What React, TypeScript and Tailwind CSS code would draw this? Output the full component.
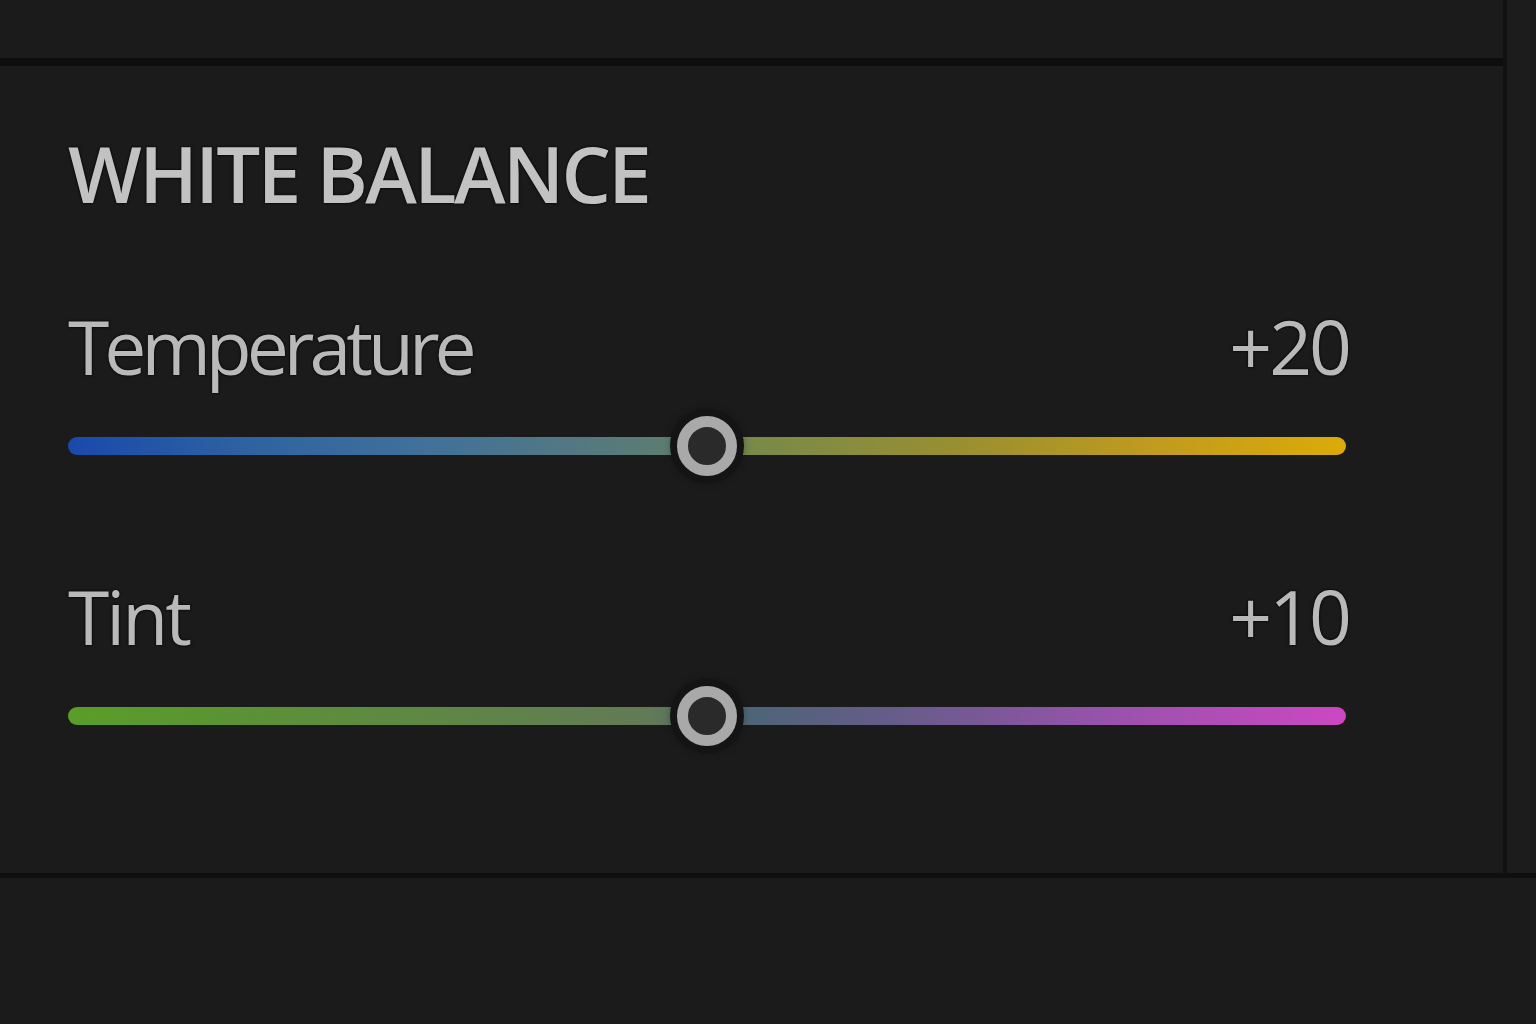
const FONT = "font-['Open_Sans','Noto_Sans',sans-serif]";
const GLOW = "[text-shadow:0_0_3px_rgba(0,0,0,0.95),0_0_1px_#000]";

type SliderProps = {
  label: string;
  value: string;
  gradient: string;
  position: number;
  tracking: string;
};

function Thumb({ position }: { position: number }) {
  return (
    <div
      className="absolute top-1/2 -translate-x-1/2 -translate-y-1/2 w-[60px] h-[60px] rounded-full bg-[#2a2a2a] border-[11px] border-[#a9a9a9] shadow-[0_0_0_7px_#141414,0_0_10px_4px_rgba(0,0,0,0.6)]"
      style={{ left: `${position}%` }}
    />
  );
}

function Slider({ label, value, gradient, position, tracking }: SliderProps) {
  return (
    <div className="flex flex-col">
      <div className={`flex items-baseline justify-between text-[75px] leading-none text-[#b9b9b9] ${GLOW}`}>
        <span className={tracking}>{label}</span>
        <span className="tracking-[-3px] -mr-[3px]">{value}</span>
      </div>
      <div className="relative h-[60px] mt-[32px] flex items-center">
        <div className={`w-full h-[18px] rounded-full ${gradient}`} />
        <Thumb position={position} />
      </div>
    </div>
  );
}

export default function App() {
  return (
    <div className={`w-[1536px] h-[1024px] bg-[#1b1b1b] flex flex-col overflow-hidden ${FONT}`}>
      <div className="flex h-[873px]">
        <div className="w-[1507px] flex flex-col border-r-4 border-[#111111]">
          <div className="h-[58px] bg-[#1b1b1b]" />
          <div className="h-[8px] bg-[#0e0e0e]" />
          <div className="flex-1 bg-[#1b1b1b] pl-[68px] pr-[157px] pt-[68px]">
            <h1 className={`text-[78px] leading-none font-semibold text-[#c2c2c2] tracking-[-2.6px] ${GLOW}`}>
              WHITE BALANCE
            </h1>
            <div className="mt-[97px]">
              <Slider
                label="Temperature"
                value="+20"
                position={50}
                tracking="tracking-[-5px]"
                gradient="bg-[linear-gradient(to_right,#1a49ad_0%,#2f64a0_15%,#41719a_28%,#5d7d72_47%,#7a8a48_54%,#9a8f30_70%,#c09b1e_85%,#dcab08_100%)]"
              />
            </div>
            <div className="mt-[103px]">
              <Slider
                label="Tint"
                value="+10"
                position={50}
                tracking="tracking-[-3px]"
                gradient="bg-[linear-gradient(to_right,#5a9d28_0%,#5c8d3c_20%,#627b55_45%,#4e6478_54%,#6f5a90_68%,#9a52ad_82%,#cc47c2_100%)]"
              />
            </div>
          </div>
        </div>
        <div className="flex-1 bg-[#1c1c1c]" />
      </div>
      <div className="h-[5px] bg-[#0f0f0f]" />
      <div className="flex-1 bg-[#1b1b1b]" />
    </div>
  );
}
